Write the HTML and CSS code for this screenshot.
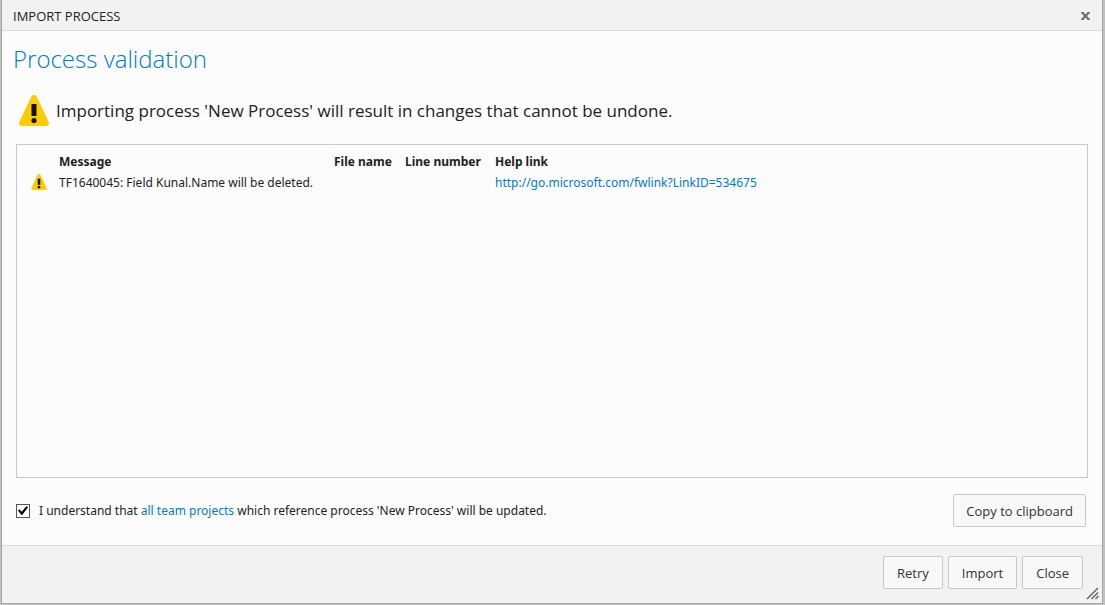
FILE: index.html
```html
<!DOCTYPE html>
<html lang="en">
<head>
<meta charset="utf-8">
<title>Import process</title>
<link rel="stylesheet" href="styles.css">
</head>
<body>
<svg class="defs" aria-hidden="true">
  <symbol id="warning" viewBox="0 0 30 31">
    <path d="M15 0c1.300 0 2.200.6 2.900 1.900L29.500 26.500c1 2.400 0 4.500-2.500 4.500H3C.5 31-.5 28.900.5 26.500L12.100 1.900C12.800.6 13.700 0 15 0z" fill="#ffcc00"/>
    <path d="M12.500 9h5v12h-5z" fill="#111"/>
    <circle cx="15" cy="25.500" r="2.600" fill="#111"/>
  </symbol>
</svg>
<div class="dialog" role="dialog" aria-labelledby="title">
  <header class="titlebar">
    <span class="caption" id="title">IMPORT PROCESS</span>
    <button class="close" type="button" aria-label="Close dialog">
      <svg class="close-icon" viewBox="0 0 9 8"><path d="M1.500 1l6 6M7.500 1l-6 6" stroke="#666" stroke-width="2"/><path d="M0 .8h3M6 .8h3M0 7.200h3M6 7.200h3" stroke="#777" stroke-width="1.400"/></svg>
    </button>
  </header>
  <main class="content">
    <h1 class="heading">Process validation</h1>
    <div class="notice">
      <svg class="notice-icon" aria-hidden="true"><use href="#warning"/></svg>
      <p class="notice-text">Importing process 'New Process' will result in changes that cannot be undone.</p>
    </div>
    <div class="results">
      <table class="messages">
        <thead>
          <tr><th class="icon-cell"></th><th class="message-cell">Message</th><th class="file-cell">File name</th><th class="line-cell">Line number</th><th>Help link</th></tr>
        </thead>
        <tbody>
          <tr>
            <td class="icon-cell"><svg class="row-icon" aria-hidden="true"><use href="#warning"/></svg></td>
            <td>TF1640045: Field Kunal.Name will be deleted.</td><td></td><td></td>
            <td><a class="link" href="#">http://go.microsoft.com/fwlink?LinkID=534675</a></td>
          </tr>
        </tbody>
      </table>
    </div>
    <div class="confirm">
      <div class="agree">
        <input class="check" type="checkbox" id="agree" checked>
        <label for="agree">I understand that <a class="link" href="#">all team projects</a> which reference process 'New Process' will be updated.</label>
      </div>
      <button class="button" type="button">Copy to clipboard</button>
    </div>
  </main>
  <footer class="footer">
    <button class="button" type="button">Retry</button>
    <button class="button" type="button">Import</button>
    <button class="button" type="button">Close</button>
    <svg class="grip" viewBox="0 0 14 13" aria-hidden="true"><path d="M1 12L12 1M5.500 12L12 5.500M9.500 12L12.500 9" stroke="#666" stroke-width="1.500" fill="none"/></svg>
  </footer>
</div>
</body>
</html>
```
FILE: styles.css
```css
* {
  box-sizing: border-box;
}

body {
  margin: 0;
  min-height: 100vh;
  display: flex;
  padding: 0 2px 1px 1px;
  background: #c0c0c0;
  color: #222;
  font-family: "Noto Sans", "Segoe UI", sans-serif;
  font-size: 12px;
  line-height: 16px;
}

.defs {
  position: absolute;
  width: 0;
  height: 0;
}

.dialog {
  position: relative;
  flex: 1;
  display: flex;
  flex-direction: column;
  border: 1px solid #a6a6a6;
  border-top: 0;
  background: #fcfcfc;
}

.titlebar {
  display: flex;
  align-items: center;
  justify-content: space-between;
  height: 31px;
  padding: 2px 12px 0 11px;
  border-bottom: 1px solid #d9d9d9;
  background: #f2f2f2;
}

.caption,
.heading,
.notice-text,
.button {
  font-family: "Open Sans", "Segoe UI", sans-serif;
}

.caption {
  font-size: 13px;
}

.close {
  display: flex;
  padding: 0;
  border: 0;
  background: none;
}

.close-icon {
  width: 9px;
  height: 8px;
}

.content {
  flex: 1;
  display: flex;
  flex-direction: column;
  padding: 12px 14px 18px;
}

.heading {
  margin: 0 0 0 -3px;
  color: #007acc;
  font-size: 24px;
  font-weight: 300;
  line-height: 32px;
}

.notice {
  display: flex;
  align-items: center;
  gap: 7px;
  margin: 20px 0 18px;
  padding-left: 3px;
}

.notice-icon {
  width: 30px;
  height: 31px;
}

.notice-text {
  margin: 0;
  font-size: 17px;
  line-height: 24px;
}

.results {
  flex: 1;
  padding: 6px 8px;
  border: 1px solid #c8c8c8;
}

.messages {
  border-collapse: collapse;
}

.messages th,
.messages td {
  height: 21px;
  padding: 2px 6px;
  text-align: left;
  vertical-align: middle;
  white-space: nowrap;
}

.messages .icon-cell {
  width: 28px;
  vertical-align: top;
}

.message-cell {
  min-width: 275px;
}

.file-cell {
  min-width: 71px;
}

.line-cell {
  min-width: 90px;
}

.row-icon {
  display: block;
  width: 16px;
  height: 16px;
}

.link {
  color: #007acc;
  text-decoration: none;
}

.confirm {
  display: flex;
  align-items: center;
  justify-content: space-between;
  margin-top: 16px;
  padding-right: 2px;
}

.agree {
  display: flex;
  align-items: center;
  gap: 9px;
}

.check {
  appearance: none;
  width: 14px;
  height: 14px;
  margin: 0;
  border: 1px solid #555;
  background: #fff;
  display: grid;
  place-items: center;
}

.check:checked::before {
  content: "";
  width: 10px;
  height: 10px;
  background: #000;
  clip-path: polygon(0 50%, 12% 38%, 38% 62%, 85% 5%, 100% 18%, 42% 95%, 34% 95%);
}

.button {
  height: 33px;
  padding: 0 12px;
  border: 1px solid #c8c8c8;
  border-radius: 2px;
  background: #f8f8f8;
  color: #333;
  font-size: 13px;
  line-height: 16px;
}

.footer {
  display: flex;
  gap: 5px;
  justify-content: flex-end;
  padding: 10px 19px 14px;
  border-top: 1px solid #d9d9d9;
  background: #f2f2f2;
}

.footer .button {
  padding: 0 13px;
}

.grip {
  position: absolute;
  right: 2px;
  bottom: 3px;
  width: 14px;
  height: 13px;
}
```
